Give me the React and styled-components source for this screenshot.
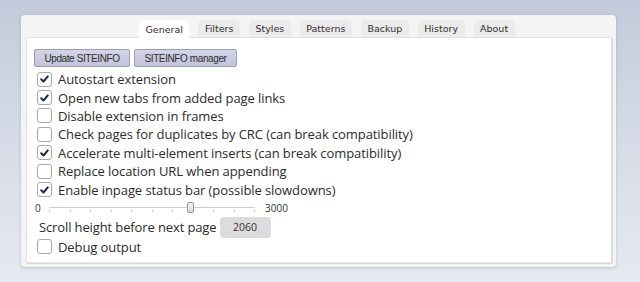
import React from "react";
import styled, { createGlobalStyle } from "styled-components";

const Global = createGlobalStyle`
  html, body { margin: 0; padding: 0; }
  body {
    width: 640px;
    height: 282px;
    overflow: hidden;
    background: linear-gradient(180deg, #c3cadb 0%, #d6dbe7 50%, #e6e9f0 100%);
    font-family: "Open Sans", "Noto Sans", sans-serif;
    color: #333;
  }
`;

const Panel = styled.div`
  box-sizing: border-box;
  margin: 15px 0 0 21px;
  width: 595px;
  height: 252px;
  background: #f4f4f4;
  border-radius: 4px;
  box-shadow: 0 1px 3px rgba(60, 70, 100, 0.25);
  padding: 0 4px 4px 5px;
  display: flex;
  flex-direction: column;
`;

const TabBar = styled.div`
  display: flex;
  align-items: flex-end;
  gap: 9px;
  height: 22px;
  padding-left: 113px;
`;

const Tab = styled.div`
  box-sizing: border-box;
  height: ${(p) => (p.$active ? "18px" : "17px")};
  margin-bottom: ${(p) => (p.$active ? "-1px" : "0")};
  padding: 0 6.5px;
  display: flex;
  align-items: center;
  border-radius: 5px 5px 0 0;
  background: ${(p) => (p.$active ? "#ffffff" : "#ebebeb")};
  font-family: "DejaVu Sans", sans-serif;
  font-size: 9.5px;
  color: #2f2f2f;
  position: relative;
  z-index: 1;
`;

const Content = styled.div`
  box-sizing: border-box;
  flex: 1;
  background: #fff;
  border: 1px solid #e3e3e3;
  box-shadow: 1px 1px 0 #d9d9d9;
  padding: 11px 8px 0 7px;
  display: flex;
  flex-direction: column;
`;

const ButtonRow = styled.div`
  display: flex;
  gap: 4px;
  margin-bottom: 3px;
`;

const Button = styled.button`
  box-sizing: border-box;
  height: 18px;
  width: ${(p) => p.$w}px;
  padding: 0;
  border: 1px solid #9b9db9;
  border-radius: 2px;
  background: linear-gradient(180deg, #d3d4e6 0%, #c3c4db 100%);
  font-family: "Liberation Sans", sans-serif;
  font-size: 10px;
  letter-spacing: -0.4px;
  color: #2e2e2e;
  display: flex;
  align-items: center;
  justify-content: center;
`;

const Row = styled.label`
  display: flex;
  align-items: center;
  height: 18.4px;
  padding-left: 3px;
  font-size: 13px;
  letter-spacing: -0.08px;
  color: #2b2b2b;
  white-space: nowrap;
`;

const Box = styled.span`
  box-sizing: border-box;
  width: 15px;
  height: 15px;
  flex: none;
  border: 1px solid #a9a9a9;
  border-radius: 3px;
  background: #fff;
  display: flex;
  align-items: center;
  justify-content: center;
  margin-right: 6px;
`;

const SliderRow = styled.div`
  display: flex;
  align-items: center;
  height: 18px;
  font-size: 10px;
  color: #333;
`;

const SliderLabel = styled.span`
  width: ${(p) => p.$w}px;
  padding-left: ${(p) => p.$pl || 0}px;
  box-sizing: border-box;
`;

const Track = styled.div`
  position: relative;
  width: 206px;
  height: 12px;
  margin-right: 10px;
`;

const TrackLine = styled.div`
  position: absolute;
  left: 0;
  right: 0;
  top: 5px;
  height: 1px;
  background: #cfcfcf;
`;

const Ticks = styled.div`
  position: absolute;
  left: 0;
  right: 0;
  top: 8px;
  display: flex;
  justify-content: space-between;
`;

const Tick = styled.span`
  width: 1px;
  height: 2px;
  background: #c4c4c4;
`;

const Handle = styled.div`
  position: absolute;
  top: 0;
  width: 7px;
  height: 11px;
  box-sizing: border-box;
  border: 1px solid #999;
  border-radius: 2px;
  background: linear-gradient(180deg, #f2f2f2, #d9d9d9);
  transform: translateX(-3px);
`;

const ScrollRow = styled.div`
  display: flex;
  align-items: center;
  height: 21px;
  margin: 0 0 0 5px;
  font-size: 13px;
  letter-spacing: -0.12px;
  color: #2b2b2b;
`;

const NumBox = styled.div`
  box-sizing: border-box;
  width: 51px;
  height: 21px;
  margin-left: 3px;
  border-radius: 4px;
  background: #dcdcdc;
  display: flex;
  align-items: center;
  justify-content: center;
  font-size: 10.5px;
  letter-spacing: 0;
  color: #333;
`;

const DebugRow = styled(Row)`
  margin-top: 0;
`;

const Check = () => (
  <svg width="9" height="8" viewBox="0 0 9 8">
    <path d="M1.2 4.3 L3.5 6.5 L7.8 1.4" fill="none" stroke="#1d2a48" strokeWidth="2" strokeLinecap="round" strokeLinejoin="round" />
  </svg>
);

const CheckRow = ({ checked, children, as: Comp = Row }) => (
  <Comp>
    <Box>{checked && <Check />}</Box>
    {children}
  </Comp>
);

const tabs = ["General", "Filters", "Styles", "Patterns", "Backup", "History", "About"];
const options = [
  ["Autostart extension", true],
  ["Open new tabs from added page links", true],
  ["Disable extension in frames", false],
  ["Check pages for duplicates by CRC (can break compatibility)", false],
  ["Accelerate multi-element inserts (can break compatibility)", true],
  ["Replace location URL when appending", false],
  ["Enable inpage status bar (possible slowdowns)", true],
];

export default function App() {
  const value = 2060;
  const max = 3000;
  return (
    <>
      <Global />
      <Panel>
        <TabBar>
          {tabs.map((t, i) => (
            <Tab key={t} $active={i === 0}>{t}</Tab>
          ))}
        </TabBar>
        <Content>
          <ButtonRow>
            <Button $w={96}>Update SITEINFO</Button>
            <Button $w={103}>SITEINFO manager</Button>
          </ButtonRow>
          {options.map(([label, checked]) => (
            <CheckRow key={label} checked={checked}>{label}</CheckRow>
          ))}
          <SliderRow>
            <SliderLabel $w={15} $pl={1}>0</SliderLabel>
            <Track>
              <TrackLine />
              <Ticks>
                {Array.from({ length: 11 }).map((_, i) => <Tick key={i} />)}
              </Ticks>
              <Handle style={{ left: `${(value / max) * 206}px` }} />
            </Track>
            <SliderLabel>3000</SliderLabel>
          </SliderRow>
          <ScrollRow>
            Scroll height before next page
            <NumBox>{value}</NumBox>
          </ScrollRow>
          <CheckRow checked={false} as={DebugRow}>Debug output</CheckRow>
        </Content>
      </Panel>
    </>
  );
}
